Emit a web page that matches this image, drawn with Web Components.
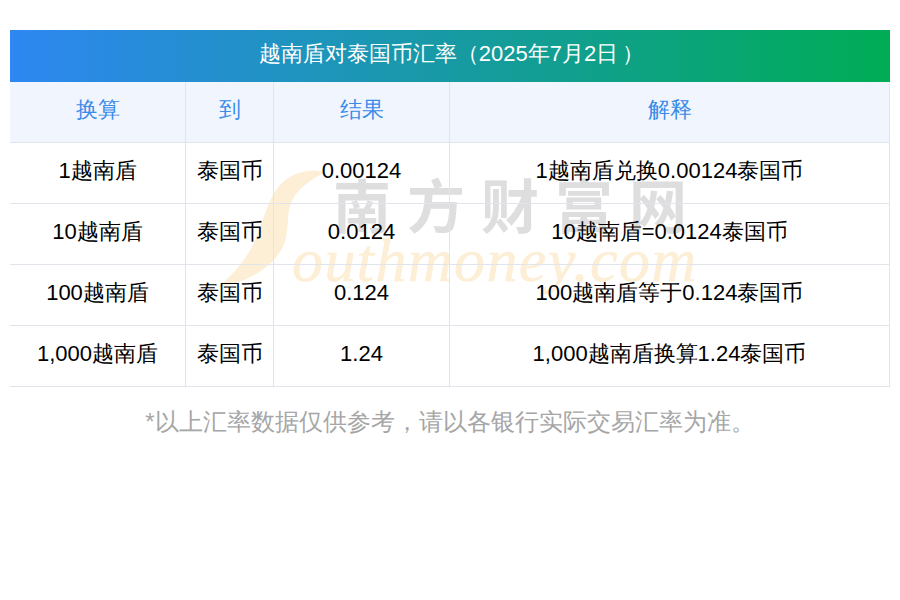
<!doctype html>
<html lang="zh">
<head>
<meta charset="utf-8">
<style>
  html, body { margin: 0; background: #fff; }
  body { font-family: "Liberation Sans", sans-serif; }
</style>
</head>
<body>
<rate-page>
  <rate-title slot="title"><span>越南盾对泰国币汇率（2025年7月2日<span style="margin:0 -4px 0 4px">）</span></span></rate-title>
  <rate-row head><span>换算</span><span>到</span><span>结果</span><span>解释</span></rate-row>
  <rate-row><span>1越南盾</span><span>泰国币</span><span>0.00124</span><span>1越南盾兑换0.00124泰国币</span></rate-row>
  <rate-row><span>10越南盾</span><span>泰国币</span><span>0.0124</span><span>10越南盾=0.0124泰国币</span></rate-row>
  <rate-row><span>100越南盾</span><span>泰国币</span><span>0.124</span><span>100越南盾等于0.124泰国币</span></rate-row>
  <rate-row><span>1,000越南盾</span><span>泰国币</span><span>1.24</span><span>1,000越南盾换算1.24泰国币</span></rate-row>
  <span slot="note">*以上汇率数据仅供参考，请以各银行实际交易汇率为准。</span>
</rate-page>

<script>
const pageTemplate = document.createElement("template");
pageTemplate.innerHTML = `
<style>
  :host { display: block; padding: 30px 10px 0; }
  #table { position: relative; }
  #mark { position: absolute; left: 205px; top: 85px; width: 500px; height: 130px; }
  #swoosh { position: absolute; left: 0; top: 0; }
  #cn {
    position: absolute; left: 118px; top: 1px; white-space: nowrap;
    font: 700 58px/70px "Noto Sans CJK SC", sans-serif;
    letter-spacing: 16px; color: #dedede;
  }
  #en {
    position: absolute; left: 77px; top: 58px; white-space: nowrap;
    font: italic 62px/70px "Liberation Serif", serif;
    letter-spacing: 1.4px; color: #fdeed6;
    -webkit-text-stroke: 0.6px #fdeed6;
  }
  #rows { position: relative; }
  #note {
    text-align: center; color: #a6a6a6; font-size: 24px; line-height: 32px;
    padding-top: 19px;
  }
</style>
<slot name="title"></slot>
<div id="table">
  <div id="mark">
    <svg id="swoosh" width="120" height="130" viewBox="0 0 120 130">
      <path fill="#fdeed6" d="M110 5 C92 1 76 6 65 18 C56 28 52 41 48 52 C42 74 30 98 3 120 C20 118 50 108 65 85 C72 74 72 65 73 52 C74 36 78 22 110 5 Z"/>
    </svg>
    <div id="cn">南方财富网</div>
    <div id="en">outhmoney.com</div>
  </div>
  <div id="rows"><slot></slot></div>
</div>
<div id="note"><slot name="note"></slot></div>
`;

class RatePage extends HTMLElement {
  constructor() {
    super();
    const shadowRoot = this.attachShadow({ mode: "open" });
    shadowRoot.appendChild(pageTemplate.content.cloneNode(true));
  }
}

const titleTemplate = document.createElement("template");
titleTemplate.innerHTML = `
<style>
  :host {
    display: flex; align-items: center; justify-content: center;
    height: 52px; box-sizing: border-box; padding: 0 1px 4px 0;
    color: #fff; font-size: 22px; white-space: nowrap;
    background: linear-gradient(90deg, #2e87f2, #00ad55);
  }
</style>
<slot></slot>
`;

class RateTitle extends HTMLElement {
  constructor() {
    super();
    const shadowRoot = this.attachShadow({ mode: "open" });
    shadowRoot.appendChild(titleTemplate.content.cloneNode(true));
  }
}

const rowTemplate = document.createElement("template");
rowTemplate.innerHTML = `
<style>
  :host {
    display: grid; grid-template-columns: 176px 88px 176px 440px;
    height: 61px; box-sizing: border-box;
    border-bottom: 1px solid #e2e4ec;
    font-size: 22px; color: #000;
  }
  :host([head]) { background: #f1f6fe; color: #3a8bea; }
  ::slotted(span) {
    display: flex; align-items: center; justify-content: center;
    box-sizing: border-box; border-right: 1px solid #e2e4ec;
    padding-bottom: 4px;
  }
</style>
<slot></slot>
`;

class RateRow extends HTMLElement {
  constructor() {
    super();
    const shadowRoot = this.attachShadow({ mode: "open" });
    shadowRoot.appendChild(rowTemplate.content.cloneNode(true));
  }
}

customElements.define("rate-page", RatePage);
customElements.define("rate-title", RateTitle);
customElements.define("rate-row", RateRow);
</script>
</body>
</html>
